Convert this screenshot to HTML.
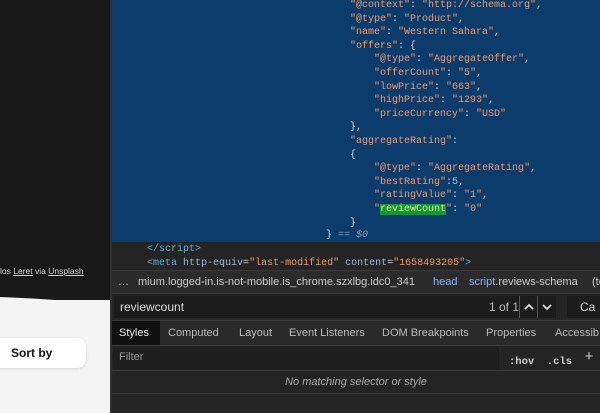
<!DOCTYPE html>
<html><head><meta charset="utf-8"><style>
*{margin:0;padding:0;box-sizing:border-box}
body{width:600px;height:413px;overflow:hidden;background:#242424;font-family:"Liberation Sans",sans-serif;position:relative}
.left{position:absolute;left:0;top:0;width:110px;height:413px;background:#f4f4f4;overflow:hidden}
.dark{position:absolute;left:0;top:0;width:110px;height:300px;background:#191919}
.cap{position:absolute;left:0;top:266px;font-size:8.5px;color:#cfcfcf;white-space:nowrap}
.cap u{text-decoration:underline}
.sort{position:absolute;left:-20px;top:338px;width:106px;height:30px;background:#fff;border-radius:9px;box-shadow:0 1px 3px rgba(0,0,0,.12);font-weight:bold;font-size:12px;color:#111;padding:8px 0 0 31px}
.div{position:absolute;left:110px;top:0;width:2px;height:413px;background:#303030}
.code{position:absolute;left:112px;top:0;width:488px;height:242px;background:#0c3c6c}
.ln{position:absolute;font-family:"Liberation Mono",monospace;font-size:10px;color:#d9d9d9;white-space:pre;line-height:13.6px}
.s{color:#f29a6c}.n{color:#a5c3e6}.g{color:#8a9bb0;font-style:italic}
.hl{background:#0f9a2d;color:#e9e9a0}
.t{color:#5db0d7}.a{color:#9bbbdc}
.bar{position:absolute;left:112px;width:488px}
.bc{top:270px;height:23px;background:#2b2b2b;border-top:1px solid #3a3a3a;font-size:11px;color:#ccc;white-space:nowrap}
.bc>span{position:absolute;top:5px}
.bc .l{color:#8ab4f8;}
.sr{top:293px;height:27px;background:#242424;border-top:1px solid #3a3a3a}
.inp{position:absolute;left:2px;top:2px;width:442px;height:22px;background:#1c1c1c;font-size:12px;color:#ddd;padding:4px 0 0 6px}
.tabs{top:320px;height:25px;background:#2a2a2a;border-top:1px solid #3a3a3a;font-size:11px;color:#bbb;white-space:nowrap}
.tabs span{position:absolute;top:6px}
.flt{top:345px;height:25px;background:#242424;border-top:1px solid #3a3a3a;font-size:11px;color:#999}
.nm{top:370px;height:24px;background:#242424;border-top:1px solid #3a3a3a;border-bottom:1px solid #3a3a3a;font-size:11px;color:#aaa;font-style:italic;text-align:center;padding-top:5px}
</style></head><body>
<div class="left">
<div class="dark"></div>
<svg style="position:absolute;left:0;top:285px" width="110" height="25"><path d="M0 12 Q55 14 110 20 L110 25 L0 25Z" fill="#f4f4f4"/></svg>
<div class="cap">los <u>Leret</u> via <u>Unsplash</u></div>
<div class="sort">Sort by</div>
</div>
<div class="div"></div>
<div class="code">
<div class="ln" style="left:238px;top:-1px"><span class="s">"@context"</span>: <span class="s">"http://schema.org"</span>,
<span class="s">"@type"</span>: <span class="s">"Product"</span>,
<span class="s">"name"</span>: <span class="s">"Western Sahara"</span>,
<span class="s">"offers"</span>: {
    <span class="s">"@type"</span>: <span class="s">"AggregateOffer"</span>,
    <span class="s">"offerCount"</span>: <span class="s">"5"</span>,
    <span class="s">"lowPrice"</span>: <span class="s">"663"</span>,
    <span class="s">"highPrice"</span>: <span class="s">"1293"</span>,
    <span class="s">"priceCurrency"</span>: <span class="s">"USD"</span>
},
<span class="s">"aggregateRating"</span>:
{
    <span class="s">"@type"</span>: <span class="s">"AggregateRating"</span>,
    <span class="s">"bestRating"</span>:<span class="n">5</span>,
    <span class="s">"ratingValue"</span>: <span class="s">"1"</span>,
    <span class="s">"<span class="hl">reviewCount</span>"</span>: <span class="s">"0"</span>
}</div>
<div class="ln" style="left:214px;top:229px">} <span class="g">== $0</span></div>
</div>
<div class="ln" style="left:147px;top:243px"><span class="t">&lt;/script&gt;</span></div>
<div class="ln" style="left:147px;top:257px"><span class="t">&lt;meta</span> <span class="a">http-equiv</span>=<span class="s">"last-modified"</span> <span class="a">content</span>=<span class="s">"1658493205"</span><span class="t">&gt;</span></div>
<div class="bar bc"><span style="left:6px">…</span><span style="left:26px">mium.logged-in.is-not-mobile.is_chrome.szxlbg.idc0_341</span><span class="l" style="left:321px">head</span><span style="left:357px"><span class="l">script</span>.reviews-schema</span><span style="left:480px">(te</span></div>
<div class="bar sr"><div class="inp">reviewcount
<span style="position:absolute;left:375px;top:4px;color:#bbb">1 of 1</span>
<span style="position:absolute;left:405px;top:0;width:1px;height:22px;background:#555"></span>
<svg style="position:absolute;left:410px;top:7px" width="10" height="8"><path d="M1 6 L5 2 L9 6" stroke="#ddd" stroke-width="1.8" fill="none"/></svg>
<span style="position:absolute;left:423px;top:0;width:1px;height:22px;background:#555"></span>
<svg style="position:absolute;left:428px;top:7px" width="10" height="8"><path d="M1 2 L5 6 L9 2" stroke="#ddd" stroke-width="1.8" fill="none"/></svg>
</div>
<div style="position:absolute;left:455px;top:2px;width:40px;height:22px;background:#1c1c1c;color:#ddd;font-size:12px;padding:4px 0 0 13px">Ca</div></div>
<div class="bar tabs"><div style="position:absolute;left:0;top:0;width:48px;height:24px;background:#111"></div>
<span style="left:7px;color:#eee">Styles</span><span style="left:56px">Computed</span><span style="left:127px">Layout</span><span style="left:177px">Event Listeners</span><span style="left:270px">DOM Breakpoints</span><span style="left:374px">Properties</span><span style="left:443px">Accessib</span></div>
<div class="bar flt"><div style="position:absolute;left:1px;top:1px;width:386px;height:22px;background:#1f1f1f"></div><span style="position:absolute;left:7px;top:5px">Filter</span>
<span style="position:absolute;left:397px;top:5px;font-family:'Liberation Mono',monospace;color:#ccc;font-weight:bold;font-size:10.5px">:hov &nbsp;.cls &nbsp;<span style="font-family:'Liberation Sans';font-weight:normal;font-size:15px;position:relative;top:-3px">+</span></span></div>
<div class="bar nm">No matching selector or style</div>
</body></html>
